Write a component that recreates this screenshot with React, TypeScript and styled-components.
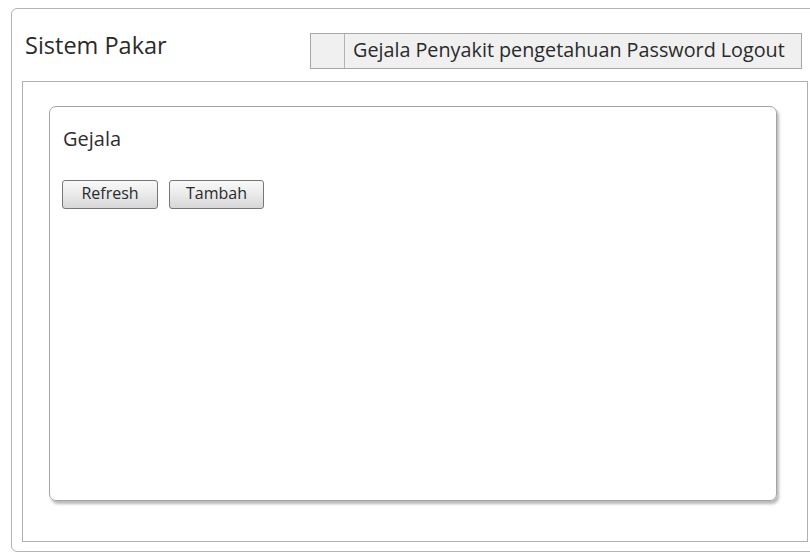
import React from "react";
import styled, { createGlobalStyle } from "styled-components";

const Global = createGlobalStyle`
  html, body {
    margin: 0;
    padding: 0;
    background: #ffffff;
    overflow: hidden;
  }
  body {
    font-family: "Open Sans", "Liberation Sans", sans-serif;
    color: #333333;
  }
`;

const Window = styled.div`
  box-sizing: border-box;
  margin: 8px 0 0 11px;
  width: 820px;
  height: 544px;
  border: 1px solid #b4b4b4;
  border-radius: 6px;
  padding: 0 0 0 10px;
  display: flex;
  flex-direction: column;
`;

const Header = styled.header`
  box-sizing: border-box;
  height: 72px;
  width: 786px;
  display: flex;
  justify-content: space-between;
  align-items: flex-start;
`;

const Title = styled.h1`
  margin: 22px 0 0 3px;
  font-size: 23.5px;
  font-weight: 400;
  line-height: 28px;
  color: #2a2a2a;
`;

const Nav = styled.nav`
  box-sizing: border-box;
  margin: 24px 6px 0 0;
  height: 36px;
  width: 492px;
  display: flex;
  border: 1px solid #a6a6a6;
  background: #f0f0f0;
`;

const NavSpacer = styled.div`
  width: 33px;
  border-right: 1px solid #b4b4b4;
`;

const NavLinks = styled.div`
  flex: 1;
  display: flex;
  align-items: center;
  padding: 0 0 4px 8px;
  gap: 5px;
  font-size: 19.8px;
  color: #2a2a2a;
`;

const NavLink = styled.span`
  white-space: nowrap;
`;

const Body = styled.main`
  box-sizing: border-box;
  width: 786px;
  height: 461px;
  border: 1px solid #b0b0b0;
  padding: 24px 30px 40px 26px;
  display: flex;
`;

const Card = styled.section`
  box-sizing: border-box;
  flex: 1;
  border: 1px solid #a4a4a4;
  border-radius: 7px;
  box-shadow: 2px 3px 3px rgba(0, 0, 0, 0.28);
  padding: 20px 12px;
`;

const CardTitle = styled.h2`
  margin: 0 0 0 1px;
  font-size: 20px;
  font-weight: 400;
  line-height: 24px;
  color: #2e2e2e;
`;

const Actions = styled.div`
  display: flex;
  gap: 11px;
  margin-top: 29px;
`;

const Button = styled.button<{ $w: number }>`
  box-sizing: border-box;
  width: ${(p) => p.$w}px;
  height: 29px;
  border: 1px solid #767676;
  border-radius: 3px;
  background: linear-gradient(#f8f8f8, #ececec 45%, #d6d6d6);
  font-family: "Open Sans", "Liberation Sans", sans-serif;
  font-size: 16px;
  color: #2a2a2a;
  padding: 0 0 3px;
  cursor: pointer;
`;

const links = ["Gejala", "Penyakit", "pengetahuan", "Password", "Logout"];

export default function App() {
  return (
    <>
      <Global />
      <Window>
        <Header>
          <Title>Sistem Pakar</Title>
          <Nav>
            <NavSpacer />
            <NavLinks>
              {links.map((l) => (
                <NavLink key={l}>{l}</NavLink>
              ))}
            </NavLinks>
          </Nav>
        </Header>
        <Body>
          <Card>
            <CardTitle>Gejala</CardTitle>
            <Actions>
              <Button $w={96}>Refresh</Button>
              <Button $w={95}>Tambah</Button>
            </Actions>
          </Card>
        </Body>
      </Window>
    </>
  );
}
